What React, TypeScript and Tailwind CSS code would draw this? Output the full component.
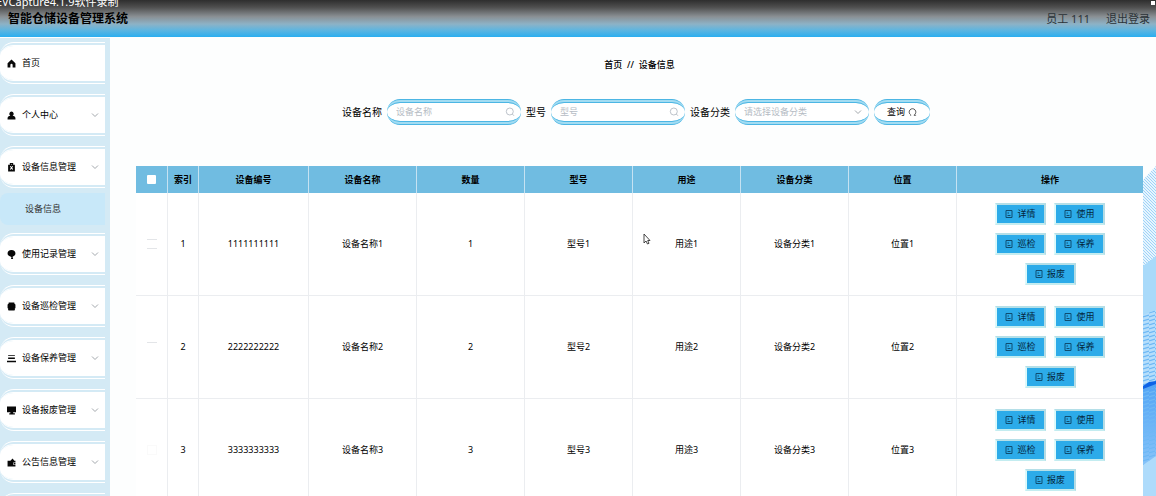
import type { ReactNode } from "react";

const glyphs: Record<string, ReactNode> = {
  home: <path d="M8 1 1 7.5V15h5v-4.5a2 2 0 0 1 4 0V15h5V7.5z" />,
  user: <path d="M8 1a4 4 0 0 1 2 7.4c3 .5 5 2 5 4.600V15H1v-2c0-2.600 2-4.100 5-4.600A4 4 0 0 1 8 1z" />,
  clipboard: <path fillRule="evenodd" d="M5 3V0h6v3h3v12H2V3zM7 3h2V2H7zM5 6l2 2.500L5 11l1.500 1L8 10.200 9.500 12 11 11 9 8.500 11 6 9.500 5.500 8 7 6.500 5.500z" />,
  balloon: <path d="M8 0c4.500 0 7 2.500 7 6S12 11 10 12v1l1 3H7l1-3-1-1C4 11 1 9.500 1 6S3.500 0 8 0z" />,
  printer: <path d="M3 1h10v2h1l1 2v6h-1v3l-1 1H3l-1-1v-3H1V5l1-2h1z" />,
  list: <path d="M2 2h12v1.500H2zM2 6h12v3H2zM0 12h16v2.500H0z" />,
  monitor: <path d="M0 1h16v10h-5v2h3v2H4v-2h2v-2H0z" />,
  wallet: <path fillRule="evenodd" d="M1 5h5l4-4 3 4h2v3h-4v4h4v3H1zM12 9h3v2h-3z" />,
};

const menu = [
  { label: "首页", icon: "home", open: false, leaf: true },
  { label: "个人中心", icon: "user", open: false, leaf: false },
  { label: "设备信息管理", icon: "clipboard", open: true, leaf: false },
  { label: "使用记录管理", icon: "balloon", open: false, leaf: false },
  { label: "设备巡检管理", icon: "printer", open: false, leaf: false },
  { label: "设备保养管理", icon: "list", open: false, leaf: false },
  { label: "设备报废管理", icon: "monitor", open: false, leaf: false },
  { label: "公告信息管理", icon: "wallet", open: false, leaf: false },
  { label: "", icon: "list", open: false, leaf: true },
];

function Chevron() {
  return (
    <svg viewBox="0 0 8 8" className="size-2 shrink-0" fill="none" stroke="#a3a8ad" strokeWidth="1">
      <path d="M1 2.500 4 5.500 7 2.500" />
    </svg>
  );
}

function SearchIcon() {
  return (
    <svg viewBox="0 0 10 10" className="size-[10px] shrink-0" fill="none" stroke="#b6bcc4" strokeWidth="0.900">
      <circle cx="4.800" cy="4.500" r="3.500" />
      <path d="M7.300 7 9 8.800" />
    </svg>
  );
}

function DocIcon() {
  return (
    <svg viewBox="0 0 8 8" className="size-2 shrink-0" fill="none" stroke="#0f4d70" strokeWidth="1">
      <path d="M1 .5h6v7H1zM2.500 3h1.500M2.500 5.500h3" />
    </svg>
  );
}

function Sidebar() {
  return (
    <nav className="flex w-[110px] shrink-0 flex-col gap-[10px] overflow-hidden bg-[#d4eaf5] pt-1 pr-[5px]">
      {menu.map((item) => (
        <div key={item.label} className="shrink-0">
          <a
            href="#"
            className="flex h-[42px] items-center rounded-l-[14px] border-y-4 border-double border-white bg-white bg-clip-padding pr-[6px] pl-[7px]"
          >
            <svg viewBox="0 0 16 16" className="mr-[6px] size-[9px] shrink-0" fill="#080808">
              {glyphs[item.icon]}
            </svg>
            <span className="flex-1 whitespace-nowrap">{item.label}</span>
            {!item.leaf && <Chevron />}
          </a>
          {item.open && (
            <a href="#" className="mt-[5px] -mb-[2px] flex h-8 items-center rounded-l-lg bg-[#c8e8f9] pl-[25px] text-[#333]">
              设备信息
            </a>
          )}
        </div>
      ))}
    </nav>
  );
}

const pill =
  "flex h-[26px] items-center rounded-[14px] border-y-4 border-double border-[#4cb6e4] bg-[linear-gradient(#fff,#fff),linear-gradient(#a3dcf2,#a3dcf2)] [background-clip:padding-box,border-box]";

function Filters() {
  return (
    <form className="flex items-center justify-center gap-[5px]">
      <label htmlFor="name" className="text-[10px]">设备名称</label>
      <div className={`${pill} w-[134px] pr-[6px] pl-[9px]`}>
        <input id="name" placeholder="设备名称" className="w-full min-w-0 bg-transparent outline-none placeholder:text-[#b6bcc4]" />
        <SearchIcon />
      </div>
      <label htmlFor="model" className="text-[10px]">型号</label>
      <div className={`${pill} w-[134px] pr-[6px] pl-[9px]`}>
        <input id="model" placeholder="型号" className="w-full min-w-0 bg-transparent outline-none placeholder:text-[#b6bcc4]" />
        <SearchIcon />
      </div>
      <label htmlFor="category" className="text-[10px]">设备分类</label>
      <div className={`${pill} w-[134px] pr-[7px] pl-[9px]`}>
        <select id="category" className="w-full min-w-0 appearance-none bg-transparent text-[#b6bcc4] outline-none">
          <option>请选择设备分类</option>
        </select>
        <Chevron />
      </div>
      <button type="button" className={`${pill} w-14 justify-center gap-[3px]`}>
        查询
        <svg viewBox="0 0 10 10" className="size-[9px]" fill="none" stroke="#333" strokeWidth="0.900">
          <path d="M3 8.500V7.600A3.700 3.700 0 1 1 7 7.600v.9M7 8h2" />
        </svg>
      </button>
    </form>
  );
}

const columns = ["设备编号", "设备名称", "数量", "型号", "用途", "设备分类", "位置"];
const rows = [1, 2, 3];
const actions = ["详情", "使用", "巡检", "保养", "报废"];
const boxes = [
  "border-y border-[#e3e5e8]",
  "border-t border-[#e3e5e8]",
  "border border-[#fafafa]",
];

function DeviceTable() {
  return (
    <table className="w-full min-w-0 flex-1 table-fixed border-separate border-spacing-0 bg-white text-center">
      <colgroup>
        <col className="w-8" />
        <col className="w-[31px]" />
        <col className="w-[110px]" />
        <col />
        <col />
        <col />
        <col />
        <col />
        <col />
        <col className="w-[186px]" />
      </colgroup>
      <thead>
        <tr className="h-[27px] bg-[#70bce1]">
          <th className="border-r border-[#c5e2f2] p-0">
            <input type="checkbox" aria-label="全选" className="mx-auto block size-[9px] appearance-none rounded-[1px] bg-white" />
          </th>
          <th className="border-r border-[#c5e2f2] p-0">索引</th>
          {columns.map((c) => (
            <th key={c} className="border-r border-[#c5e2f2] p-0">{c}</th>
          ))}
          <th className="p-0">操作</th>
        </tr>
      </thead>
      <tbody>
        {rows.map((n, i) => (
          <tr key={n} className="h-[103px] *:border-b *:border-[#ebedf0] *:p-0 [&>td:not(:last-child)]:border-r">
            <td>
              <input type="checkbox" aria-label={`选择 ${n}`} className={`mx-auto block size-[10px] appearance-none ${boxes[i]}`} />
            </td>
            <td>{n}</td>
            <td>{String(n).repeat(10)}</td>
            <td>设备名称{n}</td>
            <td>{n}</td>
            <td>型号{n}</td>
            <td>用途{n}</td>
            <td>设备分类{n}</td>
            <td>位置{n}</td>
            <td>
              <div className="mx-auto flex w-[120px] flex-wrap justify-center gap-2">
                {actions.map((a) => (
                  <button
                    key={a}
                    type="button"
                    className="flex h-[22px] w-[51px] items-center justify-center gap-1 border-2 border-t-[#b4dfe8] border-r-[#b4dbe4] border-b-[#c3ecf0] border-l-[#dcf9fb] bg-[#2cabe9] text-[#04263b]"
                  >
                    <DocIcon />
                    {a}
                  </button>
                ))}
              </div>
            </td>
          </tr>
        ))}
      </tbody>
    </table>
  );
}

function Backdrop() {
  return (
    <svg viewBox="0 0 13 330" className="h-[330px] w-[13px] shrink-0" preserveAspectRatio="none">
      <defs>
        <pattern id="dots" width="3" height="3" patternUnits="userSpaceOnUse">
          <path d="M0 0 3 3" stroke="#9fd3f7" strokeWidth="1" />
        </pattern>
        <pattern id="ripples" width="6" height="4" patternUnits="userSpaceOnUse">
          <path d="M0 3 6 1" stroke="#6db8f5" strokeWidth="1.200" />
        </pattern>
        <linearGradient id="wave" x1="0" y1="0" x2="0" y2="1">
          <stop offset="0" stopColor="#4fa3f5" />
          <stop offset="1" stopColor="#9ccffa" />
        </linearGradient>
      </defs>
      <path d="M0 14 13 0V330H0z" fill="#e6f4fe" />
      <path d="M0 14 13 0V100H0z" fill="url(#dots)" />
      <path d="M0 100 13 90V150L0 150z" fill="#a9dafa" />
      <path d="M0 149 13 144V220H0z" fill="#b5defb" />
      <path d="M0 149 13 144V220H0z" fill="url(#ripples)" />
      <path d="M0 220 13 215V330H0z" fill="url(#wave)" />
      <path d="M0 226 13 221V300H0z" fill="url(#ripples)" />
      <path d="M0 220 6 216 13 215v3L0 223z" fill="#0d63e6" />
      <path d="M0 299 13 290V330H0z" fill="#aedbfb" />
    </svg>
  );
}

export default function App() {
  return (
    <div className="relative flex h-screen flex-col overflow-hidden bg-[#fdfefe] font-['Noto_Sans','Noto_Sans_CJK_SC',sans-serif] text-[9px] leading-3 text-black">
      <header className="relative flex h-[37px] shrink-0 items-center justify-between overflow-hidden bg-[linear-gradient(#2e2e2e_0%,#505050_20%,#8a9094_45%,#8db2c6_65%,#5db5e0_82%,#2aaef0_100%)] pr-[6px] pl-2">
        <span className="absolute -top-1 -left-1 text-[11px] text-white">EVCapture4.1.9软件录制</span>
        <span className="absolute top-px right-px size-1 bg-white" />
        <h1 className="text-xs font-bold text-black">智能仓储设备管理系统</h1>
        <div className="flex gap-4 text-[11px] text-[#2b3338]">
          <span>员工 111</span>
          <a href="#">退出登录</a>
        </div>
      </header>
      <div className="flex min-h-0 flex-1 pt-px">
        <Sidebar />
        <main className="min-w-0 flex-1 pt-[21px] pl-[26px]">
          <p className="pr-[13px] text-center font-medium">首页&nbsp; //&nbsp; 设备信息</p>
          <div className="mt-7 pr-5">
            <Filters />
          </div>
          <div className="mt-[41px] flex items-start">
            <DeviceTable />
            <Backdrop />
          </div>
        </main>
      </div>
      <svg viewBox="0 0 8 12" className="absolute top-[233px] left-[643px] h-3 w-2" fill="#fff" stroke="#333" strokeWidth="0.900">
        <path d="M1 1v9l2-2 1.500 3 1.500-.7L4.700 7.500H7z" />
      </svg>
    </div>
  );
}
